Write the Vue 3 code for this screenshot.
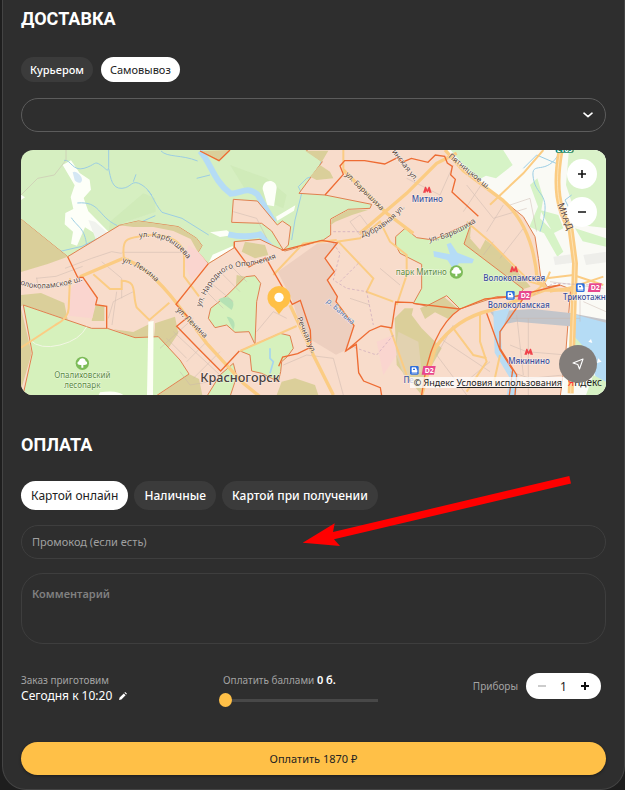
<template>
  <main class="checkout">
    <section>
      <h2 class="title">Доставка</h2>
      <div class="chips chips-small">
        <button v-for="item in deliveryTypes" :key="item" type="button" class="chip chip-small"
                :class="{active: item === delivery}" @click="delivery = item">{{ item }}
        </button>
      </div>
      <div class="select-wrapper">
        <select v-model="point" class="field point-select" aria-label="Пункт самовывоза">
          <option value=""></option>
        </select>
        <svg class="chevron" viewBox="0 0 10 6" width="10" height="6">
          <path d="M1 1.200L5 4.600 9 1.200" fill="none" stroke="#fff" stroke-width="1.6" stroke-linecap="round" stroke-linejoin="round"/>
        </svg>
      </div>

      <div class="map">
        <svg class="map-canvas" viewBox="63 15 1755 735" preserveAspectRatio="xMidYMid slice">
          <rect x="0" y="0" width="1900" height="800" fill="#d6efc1"/>
          <!-- открытая местность -->
          <path d="M1330 0H1850V760H1540V440L1400 90Z" fill="#fafaf6"/>
          <path d="M1340 0h160l38 60-50 40-30-8-30 16z" fill="#d6f3c6"/>
          <path d="M1708 0h120v250l-90-10-40-120z" fill="#daf2c9"/>
          <path d="M1725 250l93 30v25l-70-16z M1590 120l22-20 18 60-10 60 40 40 30 60-18 15-40-70-44-20 26-60z M1620 195l55 15 15 40-30 15z M1440 440l90-30 25 20-45 40z" fill="#d6f3c6"/>
          <path d="M1660 335l60-8 10 25-65 8z M1750 330l68-10v32l-60 8z M1570 345l45-12v35z" fill="#eeeeea"/>
          <path d="M188 60l25-14 26 38 30 20 4 30-22 25 14 40 65 66-30 10-45-28-24 55-18-6 6-36-25-22 2-34 24-12-8-36 12-35z" fill="#fdfff8"/>
          <path d="M265 225l20 5 45 40-42 14z" fill="#f1f3ee"/>
          <path d="M218 82c8-8 28 10 28 22s-14 12-22 2z" fill="#d5e7f4"/>
          <path d="M330 230l100-85 35 15 2 40-90 30-50 30z M690 60l110 40 60 50-10 40-110-50z" fill="#cde7b6" opacity=".6"/>
          <path d="M63 165l12-8-12-8z M788 132c0-30 40-32 42-4l-8 56-20-4z M828 215l58-34-4 16-50 30z M630 262l50-6 20 14-40 6z M626 353l74-40-2-10-60 26z" fill="#fdfff8"/>
          <g fill="none" stroke="#9ccde3" stroke-width="3">
            <path d="M192 46c20-4 25 34 60 24s30-24 50-10 20 22 24 8V15M326 70c6 30 10 62 40 60s28-30 60-10 32 50 60 82l60 18 80 50M455 150l-12-14M400 110l8-22M466 212l-40 18-120 44-60 30-130 30-60 32M232 174c70-6 60 40 120 68M214 218c20 30 40 30 46 84M63 268l30 14 20 24 44 16"/>
            <path d="M590 100l40-10M483 18c20 20 60 10 110 30M970 30l-20 60-30 10-25 25 10 20-20 80-10 60M1680 20c-40 80-90 20-80 80s60 40 20 160M1715 150l-20 15 15 30M1680 60l-70-30-40 40"/>
          </g>
          <path d="M600 18c30 30 40 90 92 128 30 0 50-24 80 2l50 84" fill="none" stroke="#b5dcf6" stroke-width="18"/>
          <path d="M685 268q50 12 95 0l36 42" fill="none" stroke="#b5dcf6" stroke-width="18"/>

          <!-- зоны доставки -->
          <g class="zone" fill="#f8dccb">
            <path d="M50 212L203 335 358 241 415 228 535 245 590 280 606 302 594 322 625 356 703 308 703 290 780 283 815 300 855 318 970 285 992 270 992 222 1045 193 1110 190 1115 178 975 150 897 145 967 50 905 5H1328L1380 65 1490 150 1570 215 1605 275 1615 340 1622 395 1642 425 1680 420 1712 432 1696 640 1680 760H50Z"/>
            <path d="M700 163L772 168 832 240 847 228 872 245 865 300 850 315 815 258 785 235 695 232Z"/>
          </g>
          <g fill="#dbcf9a">
            <path d="M63 222L203 335l-60 22-80 24z M358 241l57-13 120 17 55 35 16 22-12 20-22-40-52-24-60-12-60 0z"/>
            <path d="M63 450l60-6 70 30 10 50-133-44-7 4z M283 480h30v48h-38z M340 553l60 8 60-30 5 45-60 2z M465 575v-40l60-20 10 50-30 45z M475 750l92-63 30 15 10 48z M63 490l32 135-32 110z"/>
            <path d="M915 17h70l-20 34z M960 60l30 20 10 20-50 5-20-10z M600 18l57 29 33-32z M725 320l10-30 60 10 10 30-40 10z M992 240l4-18 50-28h60l-50 16-50 20z"/>
            <path d="M1415 235l-5 40 40 5 40 30 80 90 22 25-22 7-178-135z M1260 490l70-36 45 38-30 30-40-20-30 20z"/>
            <path d="M1184 520l30-30 26 0-5 20 30 40 60 60-40 70-20 70-75-90z M845 710l40-10 60 20 10 30H830z M930 440l50 10 10 40-30-10-20 10z M710 390l27 5-30 40z"/>
          </g>
          <path d="M1195 560l60 30 10 90-50 20-30-80z" fill="#e2d2b0"/>
          <path d="M1410 280c10-24 40-20 46 4l-16 30z" fill="#f8dccb"/>
          <path d="M833 380l120-85 60 0 -40 45 30 40-20 25 30 50-5 15 54 70-24 75-30 14-100-60-30-100z" fill="#edcfbf"/>
          <path d="M240 395l50 65-3 20-10 40-70-8 6-80z M565 300l30 20 30 36-50 50-22-50z M1130 590l50-20 10 60-40 60z" fill="#fad5cf"/>
          <g class="zone" fill="#d6f1bd">
            <path d="M70 480L275 550 322 550 405 578 475 575 540 645 567 687 465 755H68L97 625Z"/>
            <path d="M1187 275L1215 250 1250 278 1300 285 1415 230 1392 297 1570 432 1555 455 1490 455 1380 492 1340 452 1280 483 1240 475 1265 430 1265 358 1200 325 1187 300Z"/>
            <path d="M737 395L765 392 782 415 770 470 765 598 747 560 705 562 680 540 645 548 625 520 632 490 680 452Z"/>
            <path d="M720 618L765 598 840 565 870 572 880 610 862 635 845 650 842 680 835 710 785 685 755 678 750 630Z"/>
            <path d="M660 690l40-35 10 40-20 60h-70z"/>
          </g>
          <path d="M445 530l16-2-2 222h-18z M300 742q50-8 70 8h-74z" fill="#fdfff6"/>
          <path d="M90 585q30 30 90 15t80-55" fill="none" stroke="#f3f7e4" stroke-width="3"/>
          <path d="M655 465c20-20 60 0 40 30z M680 515c20 0 30 20 20 40z" fill="#b6e2b4"/>
          <path d="M1300 318l50 10-10-30 12-5 20 30 50 20-5 12-40 0-15 20-20-30-40-10z" fill="#b5dcf6"/>
          <path d="M810 610v30l10 10-10 35" fill="none" stroke="#a6d5ee" stroke-width="5"/>

          <path d="M1470 500l130-8 110 12 108 20v40l-108-20-160-14-50 10z" fill="#c4c5ca"/>
          <path d="M1480 500l50-12-28 80 5 60 50 70-10 60h-28l10-60-45-75z" fill="#b9dcf3"/>
          <path d="M1710 505l108 28v190l-30-25-30-80-48-25z" fill="#b5dcf6"/>
          <path d="M1710 560l45 50-20 80-30-20z M1780 690l38 20v40h-60z" fill="#d6f1c4"/>
          <path d="M1765 590l8-8 4 12z M1795 640l10 10-14 4z" fill="#fff"/>

          <!-- улицы -->
          <g class="lanes">
            <path d="M63 150l50-50 50-10 35-45V15M195 370l80-30 60-20 30 5M365 322h190M108 400l60-6 80-30M305 350l60 50v60M325 520l15-50 60-30M110 398l5 34 95-12M350 440l-14 100"/>
            <path d="M500 580l60 60M520 560l140 130M480 610l100-90M560 650l60-60M580 700l80-80M540 680l30 40 60-10M640 420l60 50M620 440l50 50M660 380l60 60M690 360l50 50M700 200l70 20 30 60M850 660l70-30 80 10 30 110M770 560l50-60 40 20"/>
            <path d="M1050 230l30-20 30 40-30 20zM1050 460l60 20M1140 370l60 50M1360 60l-40 90-100-50M1450 110l-60 90M1510 180l-50 80M1570 250l-70 90M1480 290l-30 40M1530 520h210M1530 600l50 20 120 10M1530 680l60 20 100-10M1585 520v230M1470 650l-60 50M1320 580l150 100M1360 540l-50 90 90 120M1550 510l20 180"/>
            <path d="M1400 120l80 100 100-30M1530 180l60-20 20 100M1750 470l68 30M1740 450v80M1650 410l160 20"/>
          </g>
          <g class="roads">
            <path d="M372 340c-8-60 10-60 50-66 70-14 130 10 130 60v60l45 60M280 388l50 44h35v-25c50 0 30 40 45 80l38 38 60-52M210 400l-4 90q0 30-40 50L63 608"/>
            <path d="M1015 290l105 110-20 40 80 30M1190 480l30-90 0-60-50-40-30-60-60 50-70 10M820 390l90-95 100-10M720 618l170-75M1170 550l50 140M1030 15v60M1400 230l70 60 120 120 50 15M1630 15l-60 70-100 94M1360 550l60 80 40 10M1440 510v80l20 60-60 90"/>
            <path d="M1480 720l20-90M1640 400l80-10 90 30M1650 440l70-15 90-30M1560 460q70-20 90-80"/>
          </g>
          <g class="roads wide">
            <path d="M240 395l130-55c60 20 110 70 160 135l90 120 110 120 50 40M1030 75l130 130 80 60M1080 265l140-120 90-90 60-30M870 480l70 150 60 120M1265 750l40-140q60-90 170-115l160-60 80 0M1335 15l55 62 120 90q90 80 102 240l25 20"/>
          </g>
          <path d="M1682 15c-20 110-8 180 30 240l13 100-13 390" fill="none" stroke="#fbcc83" stroke-width="18"/>
          <path d="M1682 15c-20 110-8 180 30 240l13 100-13 390" fill="none" stroke="#fde3b5" stroke-width="3"/>
          <path d="M1600 450l60-35 118 5M1180 570l-50 60-90-30M1020 410l60-60M1000 295l20 30-20 80 40 25 60 10 20 100M1000 260h100" fill="none" stroke="#c9a6bb" stroke-width="2" stroke-dasharray="8 6"/>

          <!-- границы -->
          <g class="border">
            <path d="M203 335l30 62h16l43 62-5 20 33 5v66M625 356l-97 122 36 38-34 28 70 72 62 62 56-60M703 290v16l44 60 50-28 80 140 24-12 30 90 2 50-40 20-45 10-12 28"/>
            <path d="M600 18l57 29 33-32M845 316l120-30 47 8-37 46 28 40-21 25 30 50-4 15 54 72-25 76 32-20 7 85 15 25 50 20 5 30M1038 618l70-60 35-15 32 6 12-78 53 2"/>
            <path d="M975 150l55-62-10-25 14-16h60l60 10 40-20 12 15 28-12 50 12 22-22 28 4 8 20 15 10-5 25 14 14-10 38 79 73M1240 475l140 17q-90 60-115 258M1380 492l75-30 90-8 135-34M1460 505l40 110 38 60-10 75M1570 460l-70 100v50l50 80-5 60"/>
          </g>

          <!-- подписи -->
          <defs>
            <path v-for="s in streets" :id="s.id" :key="s.id" :d="s.d"/>
          </defs>
          <text v-for="s in streets" :key="s.id" class="street" :class="{river: s.river, highway: s.highway}">
            <textPath :href="'#' + s.id">{{ s.name }}</textPath>
          </text>
          <text v-for="p in places" :key="p.name + p.y" :x="p.x" :y="p.y" :class="p.kind">{{ p.name }}</text>

          <g v-for="t in trees" :key="t.x" :transform="`translate(${t.x} ${t.y})`">
            <circle r="20" fill="#7dbb59"/>
            <path d="M-3 13V5c-14 2-14-9-7-11 1-12 19-12 20 0 7 2 7 13-7 11v8z" fill="#fff"/>
          </g>
          <path v-for="m in metro" :key="m.x" :transform="`translate(${m.x} ${m.y})`" fill="#f0434b"
                d="M-13 9l6-18h3L0 0l4-9h3l6 18H5L4 3 0 9l-4-6-1 6z"/>
          <g v-for="s in stations" :key="s.x" :transform="`translate(${s.x} ${s.y})`">
            <rect width="26" height="26" rx="4" fill="#2f6fdc"/>
            <path d="M6 5h11l4 9v4H6z M5 21h17" fill="#fff" stroke="#fff" stroke-width="2"/>
            <path d="M9 8h6v4H9z" fill="#2f6fdc"/>
            <path d="M40 0h37l-5 26H35z" fill="#e8468e"/>
            <text class="line-name" x="44" y="21">D2</text>
          </g>
          <path d="M1667 10h54v8q0 5-5 5h-44q-5 0-5-5z" fill="#168464"/>
          <text class="line-name" x="1670" y="20">E105</text>

          <path d="M837 423a35 35 0 0 1 14 67l-14 18-14-18a35 35 0 0 1 14-67z" fill="#ffc047"/>
          <circle cx="837" cy="457" r="14" fill="#fff"/>
        </svg>

        <div class="zoom-controls">
          <button type="button" class="map-button" aria-label="Приблизить">
            <svg viewBox="0 0 10 10" width="10" height="10">
              <path d="M5 1v8M1 5h8" stroke="#111" stroke-width="1.6"/>
            </svg>
          </button>
          <button type="button" class="map-button" aria-label="Отдалить">
            <svg viewBox="0 0 10 10" width="10" height="10">
              <path d="M1 5h8" stroke="#111" stroke-width="1.6"/>
            </svg>
          </button>
        </div>
        <div class="copyright">© Яндекс <a href="#">Условия использования</a></div>
        <div class="map-logo"><span>Я</span>ндекс</div>
        <button type="button" class="locate" aria-label="Моё местоположение">
          <svg viewBox="0 0 12 12" width="12" height="12">
            <path d="M1 5L11 1 7.500 11 5.800 6.500z" fill="none" stroke="#fff" stroke-width="1.1" stroke-linejoin="round"/>
          </svg>
        </button>
      </div>
    </section>

    <section class="payment">
      <h2 class="title">Оплата</h2>
      <div class="chips">
        <button v-for="item in paymentTypes" :key="item" type="button" class="chip"
                :class="{active: item === payment}" @click="payment = item">{{ item }}
        </button>
      </div>
      <div class="promo">
        <input v-model="promo" class="field muted" type="text" placeholder="Промокод (если есть)"
               aria-label="Промокод"/>
        <svg class="arrow" viewBox="0 0 270 72" width="270" height="72">
          <path d="M0.700 67.700L32.700 48.300 31 57 267.300 1 269 8.400 32 64.300 38 71z" fill="#f00"/>
        </svg>
      </div>
      <textarea v-model="comment" class="field muted comment" placeholder="Комментарий"
                aria-label="Комментарий"></textarea>
    </section>

    <div class="summary">
      <div class="ready">
        <span class="caption">Заказ приготовим</span>
        <button type="button" class="time">
          Сегодня к 10:20
          <svg viewBox="0 0 8 8" width="8" height="8">
            <path d="M0 8l.6-2.400L4.800 1.400l1.800 1.800L2.400 7.400zM5.400.8L6.200 0 8 1.800l-.8.8z" fill="#fff"/>
          </svg>
        </button>
      </div>
      <div class="points">
        <label for="points" class="caption">Оплатить баллами <b>{{ points }} б.</b></label>
        <input id="points" v-model="points" type="range" min="0" max="100"/>
      </div>
      <div class="cutlery">
        <span class="caption">Приборы</span>
        <div class="counter">
          <button type="button" aria-label="Меньше" :disabled="cutlery < 2" @click="cutlery--">
            <svg viewBox="0 0 8 8" width="8" height="8">
              <path d="M0 4h8" stroke="currentColor" stroke-width="2"/>
            </svg>
          </button>
          <span>{{ cutlery }}</span>
          <button type="button" aria-label="Больше" @click="cutlery++">
            <svg viewBox="0 0 8 8" width="8" height="8">
              <path d="M0 4h8M4 0v8" stroke="currentColor" stroke-width="2"/>
            </svg>
          </button>
        </div>
      </div>
    </div>

    <button type="button" class="pay">Оплатить 1870 ₽</button>
  </main>
</template>

<script setup>
import {ref} from 'vue'

const deliveryTypes = ['Курьером', 'Самовывоз']
const paymentTypes = ['Картой онлайн', 'Наличные', 'Картой при получении']

const delivery = ref('Самовывоз')
const payment = ref('Картой онлайн')
const point = ref('')
const promo = ref('')
const comment = ref('')
const points = ref(0)
const cutlery = ref(1)

// Линии, вдоль которых идут названия улиц
const streets = [
  {id: 'karb', name: 'ул. Карбышева', d: 'M418 278Q520 262 580 370'},
  {id: 'lenina1', name: 'ул. Ленина', d: 'M366 352Q430 365 490 435'},
  {id: 'lenina2', name: 'ул. Ленина', d: 'M528 496L640 606'},
  {id: 'volok', name: 'олоколамское ш.', d: 'M60 418Q130 450 280 396'},
  {id: 'narod', name: 'ул. Народного Ополчения', d: 'M602 486Q646 370 720 365T860 325'},
  {id: 'rech', name: 'Речная ул.', d: 'M890 520L945 650'},
  {id: 'bar1', name: 'ул. Барышиха', d: 'M1034 90L1160 214'},
  {id: 'dubr', name: 'Дубравная ул.', d: 'M1086 276Q1150 265 1235 165'},
  {id: 'mitin', name: 'инская ул.', d: 'M1175 20L1265 138'},
  {id: 'bar2', name: 'ул. Барышиха', d: 'M1288 290Q1350 285 1444 222'},
  {id: 'pyat', name: 'Пятницкое ш.', d: 'M1344 36L1502 166'},
  {id: 'mkad', name: 'МКАД', d: 'M1672 178L1710 280', highway: true},
  {id: 'banka', name: 'р. Банька', d: 'M978 470L1078 560', river: true}
]

const places = [
  {name: 'Красногорск', x: 720, y: 711, kind: 'city'},
  {name: 'Опалиховский', x: 247, y: 700, kind: 'park'},
  {name: 'лесопарк', x: 247, y: 728, kind: 'park'},
  {name: 'парк Митино', x: 1264, y: 389, kind: 'park'},
  {name: 'Митино', x: 1282, y: 170, kind: 'stop'},
  {name: 'Волоколамская', x: 1543, y: 408, kind: 'stop'},
  {name: 'Волоколамская', x: 1556, y: 490, kind: 'stop'},
  {name: 'Трикотажн', x: 1753, y: 464, kind: 'stop'},
  {name: 'Мякинино', x: 1587, y: 656, kind: 'stop'},
  {name: 'Пе', x: 1226, y: 713, kind: 'stop'}
]

const trees = [{x: 247, y: 655}, {x: 1369, y: 381}]
const metro = [{x: 1282, y: 134}, {x: 1542, y: 373}, {x: 1586, y: 620}]
const stations = [{x: 1230, y: 663}, {x: 1518, y: 438}, {x: 1728, y: 415}]
</script>

<style>
body {
  margin: 0;
  background: #1e1e1e;
}
</style>

<style scoped>
.checkout {
  box-sizing: border-box;
  margin-left: 2px;
  padding: 0 18px 14px;
  background: #2e2e2e;
  border: 1px solid #444;
  border-top: 0;
  border-radius: 0 0 24px 24px;
  color: #fff;
  font-family: "Noto Sans", "Open Sans", sans-serif;
  font-size: 12px;
}

button,
input,
select,
textarea {
  font-family: inherit;
}

button {
  display: flex;
  align-items: center;
  justify-content: center;
  border: 0;
  padding: 0;
  cursor: pointer;
}

.title {
  margin: 0;
  height: 37px;
  line-height: 37px;
  font-family: Roboto, "Liberation Sans", sans-serif;
  font-size: 18px;
  font-weight: 700;
  text-transform: uppercase;
}

.chips {
  display: flex;
  gap: 6px;
  margin: 18px 0 15px;
}

.chips-small {
  gap: 8px;
  margin: 20px 0 16px;
}

.chip {
  height: 29px;
  padding: 0 10px;
  border-radius: 15px;
  background: #3b3b3b;
  color: #fff;
  font-size: 12px;
  font-weight: 500;
}

.chip-small {
  height: 25px;
  padding: 0 9px;
  font-size: 11px;
}

.chip.active {
  background: #fff;
  color: #222;
  font-weight: 400;
}

.field {
  display: block;
  box-sizing: border-box;
  width: 100%;
  height: 34px;
  padding: 0 10px 2px;
  border: 1px solid #5c5c5c;
  border-radius: 17px;
  background: transparent;
  color: #fff;
  font-size: 11px;
  outline: none;
}

.muted {
  border-color: #3e3e3e;
}

.muted::placeholder {
  color: #a0a0a0;
  opacity: 1;
}

.select-wrapper,
.promo {
  position: relative;
}

.point-select {
  appearance: none;
}

.chevron {
  position: absolute;
  right: 13px;
  top: 14px;
  pointer-events: none;
}

.map {
  position: relative;
  height: 245px;
  margin-top: 18px;
  border-radius: 12px;
  overflow: hidden;
}

.map-canvas {
  display: block;
  width: 100%;
  height: 100%;
}

.zone path {
  stroke: #e08050;
  stroke-width: 3;
}

.lanes {
  fill: none;
  stroke: #c9b5ac;
  stroke-width: 2;
  opacity: .7;
}

.roads {
  fill: none;
  stroke: #fbcc83;
  stroke-width: 6;
}

.roads.wide {
  stroke-width: 10;
}

.border {
  fill: none;
  stroke: #ee6c33;
  stroke-width: 4;
}

.map-canvas text {
  font-size: 24px;
  paint-order: stroke;
  stroke: rgba(255, 255, 255, .6);
  stroke-width: 3px;
}

.map-canvas .street {
  font-size: 23px;
  fill: #5c4a42;
}

.map-canvas .river {
  fill: #5379b4;
}

.map-canvas .highway {
  font-size: 29px;
}

.map-canvas .city {
  font-size: 38px;
  font-weight: 500;
  fill: #4b413d;
  text-anchor: middle;
}

.map-canvas .park {
  font-size: 24px;
  fill: #5b8b3e;
  text-anchor: middle;
}

.map-canvas .stop {
  font-size: 24px;
  font-weight: 500;
  fill: #3d4f9b;
  text-anchor: middle;
}

.map-canvas .line-name {
  font-size: 21px;
  font-weight: 700;
  fill: #fff;
  stroke: none;
}

.zoom-controls {
  position: absolute;
  top: 9px;
  right: 9px;
  display: grid;
  gap: 8px;
}

.map-button {
  width: 30px;
  height: 30px;
  border-radius: 50%;
  background: #fff;
}

.copyright {
  position: absolute;
  right: 42px;
  bottom: 7px;
  padding: 0 2px 0 4px;
  background: rgba(255, 255, 255, .75);
  color: #222;
  font-size: 9px;
  line-height: 11px;
}

.copyright a {
  color: inherit;
}

.map-logo {
  position: absolute;
  right: 4px;
  bottom: 6px;
  color: #222;
  font-size: 10px;
  line-height: 14px;
}

.map-logo span {
  color: #f33;
}

.locate {
  position: absolute;
  right: 9px;
  bottom: 12px;
  width: 38px;
  height: 38px;
  border-radius: 50%;
  background: #827d7a;
}

.payment {
  margin-top: 31px;
}

.arrow {
  position: absolute;
  left: 281px;
  top: -50px;
  pointer-events: none;
}

.comment {
  height: 71px;
  margin-top: 14px;
  padding: 12px 10px;
  border-radius: 22px;
  resize: none;
}

.comment::placeholder {
  color: #808080;
  font-weight: 600;
}

.summary {
  display: grid;
  grid-template-columns: repeat(3, 1fr);
  margin: 28px 0 36px;
  height: 34px;
}

.caption {
  color: #a3a3a3;
  font-size: 10px;
  line-height: 16px;
}

.ready .caption {
  display: block;
}

.time {
  gap: 7px;
  background: none;
  color: #fff;
  font-size: 12px;
  line-height: 16px;
}

.points {
  padding: 0 3px;
}

.points .caption {
  display: block;
  padding-left: 4px;
}

.points b {
  color: #fff;
  font-size: 11px;
  font-weight: 600;
}

.points input {
  display: block;
  width: 159px;
  height: 14px;
  margin: 5px 0 0;
  appearance: none;
  background: linear-gradient(#484848, #484848) center / 100% 3px no-repeat;
}

.points input::-webkit-slider-thumb {
  appearance: none;
  width: 13px;
  height: 14px;
  border-radius: 50%;
  background: #ffc047;
}

.cutlery {
  display: flex;
  align-items: center;
  justify-content: flex-end;
  gap: 8px;
  height: 28px;
  padding-right: 5px;
}

.counter {
  box-sizing: border-box;
  display: flex;
  align-items: center;
  justify-content: space-between;
  width: 75px;
  height: 26px;
  padding: 0 12px;
  border-radius: 13px;
  background: #fff;
  color: #222;
  font-size: 12px;
}

.counter button {
  background: none;
  color: #111;
}

.counter button:disabled {
  color: #ccc;
}

.pay {
  width: 100%;
  height: 33px;
  border-radius: 17px;
  background: #ffc047;
  box-shadow: 0 1px 3px rgba(0, 0, 0, .4);
  color: #222;
  font-size: 11px;
}
</style>
